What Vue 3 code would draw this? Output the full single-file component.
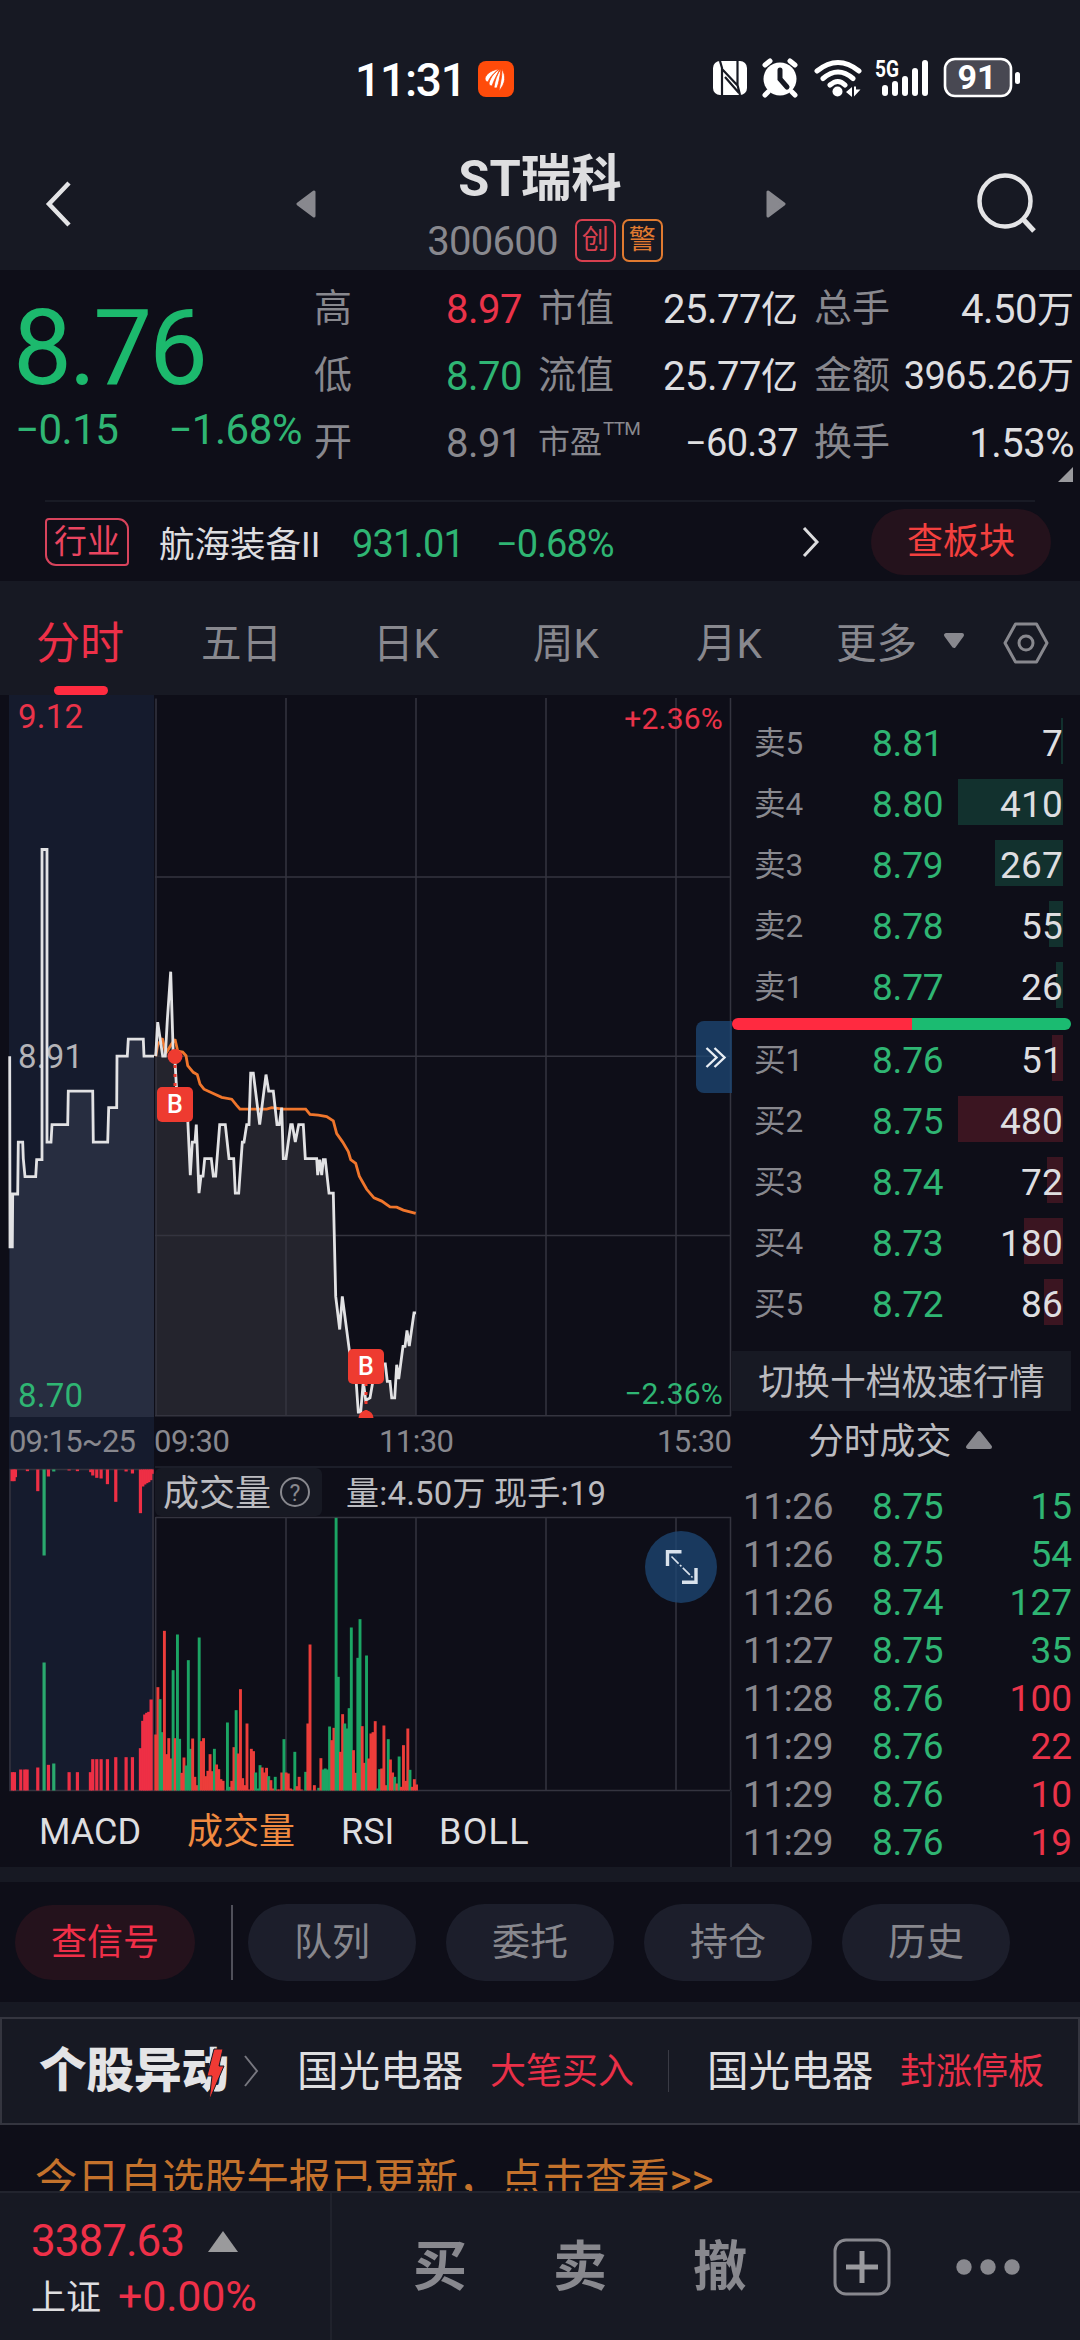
<script setup>
const quotes = [
  { label: '高', value: '8.97', tone: 'red' },
  { label: '市值', value: '25.77', unit: '亿' },
  { label: '总手', value: '4.50', unit: '万' },
  { label: '低', value: '8.70', tone: 'green' },
  { label: '流值', value: '25.77', unit: '亿' },
  { label: '金额', value: '3965.26', unit: '万', tight: true },
  { label: '开', value: '8.91', tone: 'muted' },
  { label: '市盈', sup: 'TTM', value: '−60.37', tight: true },
  { label: '换手', value: '1.53%' },
]

const asks = [
  { name: '卖5', price: '8.81', volume: 7, bar: 2 },
  { name: '卖4', price: '8.80', volume: 410, bar: 105 },
  { name: '卖3', price: '8.79', volume: 267, bar: 68 },
  { name: '卖2', price: '8.78', volume: 55, bar: 14 },
  { name: '卖1', price: '8.77', volume: 26, bar: 7 },
]
const bids = [
  { name: '买1', price: '8.76', volume: 51, bar: 11 },
  { name: '买2', price: '8.75', volume: 480, bar: 105 },
  { name: '买3', price: '8.74', volume: 72, bar: 16 },
  { name: '买4', price: '8.73', volume: 180, bar: 39 },
  { name: '买5', price: '8.72', volume: 86, bar: 19 },
]
const trades = [
  { time: '11:26', price: '8.75', volume: 15, tone: 'green' },
  { time: '11:26', price: '8.75', volume: 54, tone: 'green' },
  { time: '11:26', price: '8.74', volume: 127, tone: 'green' },
  { time: '11:27', price: '8.75', volume: 35, tone: 'green' },
  { time: '11:28', price: '8.76', volume: 100, tone: 'red' },
  { time: '11:29', price: '8.76', volume: 22, tone: 'red' },
  { time: '11:29', price: '8.76', volume: 10, tone: 'red' },
  { time: '11:29', price: '8.76', volume: 19, tone: 'red' },
]

// Price series: x in thirds of a pixel, y in chart units (2.119 per pixel) below the chart origin.
const parse = (s) =>
  s.trim().split(/\s+/).map((p) => {
    const [x, y] = p.split(',').map(Number)
    return `${(x / 3).toFixed(1)},${(y / 2.119 - 5).toFixed(1)}`
  }).join(' ')

const auction = parse(`29,776 30,1180 37,1180 38,1068 53,1068 55,958 68,958 70,993 75,1031 107,1031 110,995 126,995
 126,338 141,338 141,958 153,958 156,921 203,921 205,850 278,850 280,958 323,958 326,885 350,885 351,776 382,776
 385,740 430,740 432,776 462,776`)
const price = parse(`467,776 473,704 488,776 496,776 502,700 512,597 520,776 524,776 530,850 545,850 562,890 571,1028 577,958
 585,958 589,921 597,1066 603,1030 609,1030 614,993 634,993 640,1030 647,1030 659,921 676,921 687,993 701,993
 706,1066 716,1066 727,958 732,958 740,921 747,921 752,812 760,812 779,921 798,815 806,850 820,850 831,921 838,921
 845,885 850,993 858,993 872,921 877,921 886,958 896,921 910,921 916,993 950,993 953,1028 959,995 965,1028 970,995
 976,995 987,1066 1000,1066 1007,1285 1019,1355 1027,1285 1050,1410 1065,1430 1075,1530 1082,1530 1090,1465
 1097,1505 1110,1500 1120,1460 1140,1428 1156,1428 1162,1465 1170,1465 1175,1500 1184,1500 1190,1430 1196,1460
 1209,1391 1215,1391 1221,1357 1228,1390 1242,1320 1248,1320`)
const average = parse(`467,776 473,752 487,738 497,770 515,750 525,740 533,765 548,767 558,775 563,796 580,810 592,815
 600,835 612,846 640,855 665,863 695,867 710,880 720,888 800,888 815,885 850,888 917,888 930,899 955,901 980,904
 1000,913 1010,940 1028,958 1045,978 1052,995 1067,1003 1078,1030 1090,1045 1100,1058 1122,1076 1145,1083 1170,1095
 1190,1096 1210,1102 1247,1109`)

// Volume per minute: bar height in thirds of a pixel, with r/g for direction.
const volume = `168r 310r 274g 175g 479r 109r 157r 96r 361g 157r 468g 155g 53r 99r 75g 391g 125g 156r 41r 16r 459g
 148r 157r 43r 59r 109r 58r 125g 78r 64r 34r 29r 0r 204g 11g 29r 130r 241g 111r 304r 37r 16r 201r 3r 125r 118r 54g 6g
 76g 69r 54r 68r 43g 31r 6r 41g 3r 3r 54r 154g 54r 51r 6r 3r 116g 13r 41r 3r 0r 56g 201r 438r 0r 16r 0r 8g 97r 63g
 66g 63g 192g 151r 188r 818g 341g 116r 229r 201g 186g 247g 489g 121r 53r 398g 514g 193r 83r 405g 96r 171r 175r 208r
 6g 64g 66r 195r 16r 154g 93r 54r 41g 21r 102g 11r 136r 29r 186r 62g 11r 34r 18r`
  .trim().split(/\s+/)
  .map((v, i) => ({ x: (467 + i * 6.52) / 3 - 1.4, h: parseInt(v) / 3, up: v.endsWith('r') }))

const bars = (s) =>
  s.trim().split(/\s+/).map((v) => {
    const [x, h] = v.split(',')
    return { x: Number(x) / 3 - 1.5, h: parseInt(h) / 3, up: !h.endsWith('g') }
  })
const auctionTop = bars(`36,35 42,35 46,23 82,5 113,65 132,258g 145,21 161,6g 207,3 232,5 272,8 278,18 290,25 303,27
 322,44 347,97 378,6 397,12 421,131 428,51 434,45 440,41 446,38 452,32 456,13`)
const auctionBottom = bars(`37,55 43,55 62,63 74,63 81,63 113,69 132,384g 145,77 161,81g 207,55 232,55 271,55 278,94
 290,94 303,94 322,94 347,100 378,100 397,100 421,127 428,209 434,228 440,233 446,236 453,273`)
</script>

<template>
  <div class="app">
    <header class="top">
      <div class="status">
        <div class="clock">
          <span class="time">11:31</span>
          <svg width="36" height="36" viewBox="0 0 36 36">
            <rect width="36" height="36" rx="8" fill="#ff4b0a" />
            <path d="M7 17c2-5 7-8 14-9-6 5-9 8-11 13-2 0-3-2-3-4zM11 22c2-7 6-11 11-14-3 6-6 11-8 17-2 0-3-1-3-3zM16 26c1-7 3-13 7-18-1 8-2 13-4 19-2 0-3 0-3-1zM21 30c1-7 3-13 3-22 4 7 4 14-3 22z" fill="#fff" stroke="#ff4b0a" stroke-width=".8" />
          </svg>
        </div>
        <svg class="signals" width="310" height="44" viewBox="0 0 310 44">
          <g fill="#fff">
            <rect x="0" y="4" width="34" height="34" rx="7" />
            <circle cx="67" cy="22" r="16.5" />
            <circle cx="124.500" cy="34.500" r="5" />
            <path d="M133 35l6-5v10zM141 29.500v10l6.500-7h-4.500v-3z" />
            <rect x="169" y="28" width="6" height="11" rx="3" />
            <rect x="179" y="24" width="6" height="15" rx="3" />
            <rect x="189" y="19" width="6" height="20" rx="3" />
            <rect x="199" y="11" width="6" height="28" rx="3" />
            <rect x="209" y="3" width="6" height="36" rx="3" />
            <rect x="302" y="15" width="5" height="12" rx="2.500" />
          </g>
          <path d="M7 4l2 7v27M9 12l16 17M12 20l14 16M24.500 4v24l2.500 10" fill="none" stroke="#171923" stroke-width="2.200" />
          <path d="M52 8l5-4M82 8l-5-4M55 35l-3 3M79 35l3 3" stroke="#fff" stroke-width="5" stroke-linecap="round" />
          <path d="M67 13v9l7 8" fill="none" stroke="#171923" stroke-width="5" stroke-linecap="round" />
          <g fill="none" stroke="#fff" stroke-width="5" stroke-linecap="round">
            <path d="M104 14q21-17 42 0M110 21.500q15-13 30 0M117 28q8-7 15 0" />
          </g>
          <rect x="232" y="2" width="66" height="37" rx="10" fill="#484852" stroke="#fff" stroke-width="2.600" />
          <text x="162" y="20" class="net" textLength="24" lengthAdjust="spacingAndGlyphs">5G</text>
          <text x="264" y="32" class="battery" text-anchor="middle">91</text>
        </svg>
      </div>
      <div class="nav">
        <svg class="back" width="30" height="48" viewBox="0 0 30 48"><path d="M25 3L5 24l20 21" fill="none" stroke="#e4e4e6" stroke-width="4.500" /></svg>
        <svg class="prev" width="20" height="28" viewBox="0 0 20 28"><path d="M18 2v24L2 14z" fill="#88888e" stroke="#88888e" stroke-width="3" stroke-linejoin="round" /></svg>
        <div class="title">
          <h1>ST瑞科</h1>
          <div class="code"><span>300600</span><i class="tag">创</i><i class="tag warn">警</i></div>
        </div>
        <svg class="next" width="20" height="28" viewBox="0 0 20 28"><path d="M2 2v24l16-12z" fill="#88888e" stroke="#88888e" stroke-width="3" stroke-linejoin="round" /></svg>
        <svg class="search" width="62" height="62" viewBox="0 0 62 62"><circle cx="29" cy="29" r="25.500" fill="none" stroke="#e4e4e6" stroke-width="4.500" /><path d="M46 46l12 13" stroke="#e4e4e6" stroke-width="5" /></svg>
      </div>
    </header>

    <section class="quote">
      <div class="last green">
        <div class="big">8.76</div>
        <div class="change"><span>−0.15</span><span>−1.68%</span></div>
      </div>
      <div class="stats">
        <div v-for="q in quotes" :key="q.label" class="stat">
          <span class="label" :class="{ small: q.sup }">{{ q.label }}<sup v-if="q.sup">{{ q.sup }}</sup></span>
          <span class="value" :class="[q.tone, { tight: q.tight }]">{{ q.value }}<em v-if="q.unit">{{ q.unit }}</em></span>
        </div>
      </div>
      <svg class="corner" width="15" height="15"><path d="M15 0v15H0z" fill="#9a9a9e" /></svg>
    </section>

    <section class="industry">
      <span class="badge">行业</span>
      <span class="name">航海装备II</span>
      <span class="idx green">931.01</span>
      <span class="pct green">−0.68%</span>
      <svg class="go" width="20" height="32" viewBox="0 0 20 32"><path d="M3 2l13 14L3 30" fill="none" stroke="#dcdcde" stroke-width="3" /></svg>
      <button class="sector">查板块</button>
    </section>

    <nav class="tabs">
      <span class="tab active">分时</span>
      <span class="tab">五日</span>
      <span class="tab">日K</span>
      <span class="tab">周K</span>
      <span class="tab">月K</span>
      <span class="tab">更多</span>
      <svg class="drop" width="22" height="18" viewBox="0 0 22 18"><path d="M3 3h16l-8 11z" fill="#88888e" stroke="#88888e" stroke-width="4" stroke-linejoin="round" /></svg>
      <svg class="hex" width="46" height="42" viewBox="0 0 46 42"><path d="M12.500 2h21L44 21 33.500 40h-21L2 21z" fill="none" stroke="#88888e" stroke-width="3" stroke-linejoin="round" /><circle cx="23" cy="21" r="7" fill="none" stroke="#88888e" stroke-width="3" /></svg>
    </nav>

    <main class="market">
      <div class="charts">
        <svg class="chart" width="732" height="1097" viewBox="0 0 732 1097">
          <rect x="9" y="0" width="145" height="1096" fill="#151b2d" />
          <polygon :points="`9.700,722 ${auction} 154,722`" fill="#272d40" />
          <polygon :points="`155.700,720 ${price} 416,720`" fill="#24242d" />
          <g stroke="#34343f" stroke-width="1.500">
            <path d="M156 3.500V721M155 182h575.500M155 361.300h575.500M155 540.500h575.500M155 720.800h576" fill="none" />
            <path d="M286 3V721M416 3V721M546 3V721M676 3V721M730.500 3V721" />
            <path d="M155.700 822.500H730.500V1095.500H10V774.500H153V1095M155.700 822V1095M286 822V1095M416 822V1095M546 822V1095M676 822V1095" fill="none" />
          </g>
          <path d="M155 772H732M731 1095V1097" stroke="#1c1e29" stroke-width="2" />
          <text x="18" y="373" class="axis big-axis" fill="#b4b4b8">8.91</text>
          <polyline :points="auction" class="line" />
          <polyline :points="average" class="line avg" />
          <polyline :points="price" class="line" />
          <text x="18" y="33" class="axis big-axis" fill="#ea3349">9.12</text>
          <text x="18" y="712" class="axis big-axis" fill="#2fb573">8.70</text>
          <text x="723" y="34" class="axis pct-axis" text-anchor="end" fill="#ea3349">+2.36%</text>
          <text x="723" y="709" class="axis pct-axis" text-anchor="end" fill="#2fb573">−2.36%</text>

          <g fill="#ee3b30">
            <path d="M175 361v35M366 688v32" stroke="#ee3b30" stroke-width="3" stroke-dasharray="3 6" />
            <circle cx="175" cy="361.500" r="7.500" />
            <path d="M358.500 723a7.500 7.500 0 1 1 15 0z" />
            <rect x="157" y="392" width="36" height="35" rx="5" />
            <rect x="348" y="654" width="36" height="35" rx="5" />
          </g>
          <text x="175" y="418" class="mark">B</text>
          <text x="366" y="680" class="mark">B</text>

          <path d="M732 326h-28a8 8 0 0 0-8 8v56a8 8 0 0 0 8 8h28z" fill="#1d4876" fill-opacity=".75" />
          <path d="M706.500 353l10 9.500-10 9.500M714.500 353l10 9.500-10 9.500" fill="none" stroke="#e8eef4" stroke-width="2.400" />

          <text x="9" y="757" class="clock-axis" textLength="127">09:15~25</text>
          <text x="154" y="757" class="clock-axis" textLength="76">09:30</text>
          <text x="379" y="757" class="clock-axis" textLength="75">11:30</text>
          <text x="657" y="757" class="clock-axis" textLength="75">15:30</text>

          <rect x="155" y="773" width="167" height="48" rx="6" fill="#171923" />
          <text x="163" y="811" class="vol-title">成交量</text>
          <circle cx="295" cy="797" r="14" fill="none" stroke="#88888e" stroke-width="2" />
          <text x="295" y="805.500" class="help">?</text>
          <text x="346" y="810" class="vol-info" textLength="260">量:4.50万 现手:19</text>

          <rect v-for="(b, i) in auctionTop" :key="'t' + i" :x="b.x" y="774.500" width="3.200" :height="b.h" :fill="b.up ? '#ee2f45' : '#2aa96e'" />
          <rect v-for="(b, i) in auctionBottom" :key="'b' + i" :x="b.x" :y="1095.500 - b.h" width="3.200" :height="b.h" :fill="b.up ? '#ee2f45' : '#2aa96e'" />
          <rect v-for="(b, i) in volume" :key="'v' + i" :x="b.x" :y="1095.500 - b.h" width="2.900" :height="b.h" :fill="b.up ? '#ec3d3a' : '#1ba564'" />

          <circle cx="681" cy="872" r="36" fill="#1d4876" fill-opacity=".75" />
          <path d="M667.500 871v-14.200h14M696 873v14.200h-14" fill="none" stroke="#d9e2ec" stroke-width="3.400" />
          <path d="M671.500 861.500l21 21" stroke="#d9e2ec" stroke-width="1.600" stroke-dasharray="10 2 2 2" />
        </svg>
        <div class="indicators">
          <span>MACD</span><span class="on">成交量</span><span>RSI</span><span>BOLL</span>
        </div>
      </div>

      <aside class="book">
        <div class="levels asks">
          <div v-for="r in asks" :key="r.name" class="level">
            <span class="lname">{{ r.name }}</span><span class="lprice green">{{ r.price }}</span>
            <span class="lvol"><i class="bar sell" :style="{ width: r.bar + 'px' }"></i><b>{{ r.volume }}</b></span>
          </div>
        </div>
        <div class="ratio"><i></i><i></i></div>
        <div class="levels bids">
          <div v-for="r in bids" :key="r.name" class="level">
            <span class="lname">{{ r.name }}</span><span class="lprice green">{{ r.price }}</span>
            <span class="lvol"><i class="bar buy" :style="{ width: r.bar + 'px' }"></i><b>{{ r.volume }}</b></span>
          </div>
        </div>
        <div class="switch">切换十档极速行情</div>
        <div class="ticks-title">分时成交<svg width="28" height="20" viewBox="0 0 28 20"><path d="M3 17h22L14 3z" fill="#88888e" stroke="#88888e" stroke-width="4" stroke-linejoin="round" /></svg></div>
        <div class="ticks">
          <div v-for="(t, i) in trades" :key="i" class="tick">
            <span class="ttime">{{ t.time }}</span><span class="lprice green">{{ t.price }}</span><span class="tvol" :class="t.tone">{{ t.volume }}</span>
          </div>
        </div>
      </aside>
    </main>

    <section class="actions">
      <button class="signal">查信号</button>
      <i class="sep"></i>
      <button>队列</button><button>委托</button><button>持仓</button><button>历史</button>
    </section>

    <section class="alerts">
      <div class="brand">个股异动<svg width="20" height="54" viewBox="0 0 20 54"><path d="M9 1h9l-4 17h5L4 53l3-25H2z" fill="#f03a34" stroke="#171923" stroke-width="1" /></svg></div>
      <svg class="more" width="18" height="34" viewBox="0 0 18 34"><path d="M2 2l12 15L2 32" fill="none" stroke="#77777f" stroke-width="2" /></svg>
      <span class="stock">国光电器</span><span class="event">大笔买入</span>
      <i class="bar-sep"></i>
      <span class="stock">国光电器</span><span class="event">封涨停板</span>
    </section>

    <section class="notice">今日自选股午报已更新，点击查看&gt;&gt;</section>

    <footer class="dock">
      <div class="index">
        <div class="row"><span class="num">3387.63</span><svg width="30" height="21"><path d="M15 0l15 21H0z" fill="#9a9a9c" /></svg></div>
        <div class="row"><span class="iname">上证</span><span class="ipct">+0.00%</span></div>
      </div>
      <div class="ops">
        <span>买</span><span>卖</span><span>撤</span>
        <svg class="plus" width="58" height="58" viewBox="0 0 58 58"><rect x="2" y="2" width="54" height="54" rx="11" fill="none" stroke="#88888e" stroke-width="3" /><path d="M29 13v32M13 29h32" stroke="#9a9a9e" stroke-width="5" /></svg>
        <svg class="dots" width="64" height="16" viewBox="0 0 64 16"><g fill="#88888e"><circle cx="8" cy="8" r="7.700" /><circle cx="32" cy="8" r="7.700" /><circle cx="56" cy="8" r="7.700" /></g></svg>
      </div>
    </footer>
  </div>
</template>

<style>
body { background: #0e0e18; }
</style>

<style scoped>
* { box-sizing: border-box; }
.app {
  width: 1080px; height: 2340px; overflow: hidden; background: #0e0e18; color: #dedee0;
  font-family: Roboto, "Noto Sans CJK SC", sans-serif; display: flex; flex-direction: column;
}
.app > * { flex: none; }
i, em { font-style: normal; }
svg { display: block; flex: none; }
button { border: 0; padding: 0; font-family: inherit; }
.red { color: #ea3349; }
.green { color: #2fb573; }
.muted { color: #88888e; }

.top { height: 270px; background: #171923; }
.status { height: 135px; padding: 57px 0 0 355px; display: flex; }
.clock { display: flex; align-items: center; height: 44px; width: 358px; gap: 14px; }
.time { font-size: 46px; font-weight: 500; color: #fff; letter-spacing: -1.2px; width: 109px; line-height: 46px; padding-top: 2px; }
.net { font-size: 23px; font-weight: 700; fill: #fff; }
.battery { font-size: 34px; font-weight: 700; fill: #fff; }
.nav { height: 135px; display: flex; align-items: flex-start; }
.back { margin: 45px 0 0 44px; }
.prev { margin: 55px 0 0 222px; }
.title { width: 450px; height: 135px; display: flex; flex-direction: column; align-items: center; }
h1 { margin: 11px 0 0 -2px; font-size: 50.500px; line-height: 66px; font-weight: 700; color: #dedee0; }
.code { display: flex; align-items: center; height: 48px; margin: 4px 0 0 8px; font-size: 40px; color: #88888e; letter-spacing: -0.7px; }
.code span { padding-top: 2px; }
.tag { width: 41px; height: 43px; border: 2px solid #d8404f; border-radius: 7px; color: #d8404f; font-size: 27px; line-height: 38px; text-align: center; margin-left: 6px; letter-spacing: 0; }
.tag:nth-child(2) { margin-left: 17px; }
.tag.warn { border-color: #e07a30; color: #e07a30; }
.next { margin: 55px 0 0 0; }
.search { margin: 37px 0 0 190px; }

.quote { height: 230px; display: flex; position: relative; }
.last { width: 314px; padding: 31px 0 0 13px; }
.big { font-size: 105px; line-height: 96px; letter-spacing: -3.200px; color: #1cb96d; }
.change { display: flex; font-size: 42px; line-height: 46px; margin-top: 10px; justify-content: space-between; padding: 0 12px 0 2px; letter-spacing: -0.5px; }
.stats { width: 760px; padding-top: 6px; display: grid; grid-template-columns: 208px 260px 260px; grid-auto-rows: 67px; justify-content: space-between; }
.stat { display: flex; justify-content: space-between; align-items: center; line-height: 67px; }
.label { font-size: 38px; color: #88888e; display: flex; align-items: center; margin-top: -2px; }
.label.small { font-size: 32px; }
sup { font-size: 19px; line-height: 20px; align-self: flex-start; margin: 10px 0 0 1px; letter-spacing: -0.8px; }
.value { font-size: 40px; letter-spacing: -0.5px; white-space: nowrap; }
.value.tight { font-size: 38px; letter-spacing: -0.700px; }
.value em { font-size: 37px; letter-spacing: 0; line-height: 40px; }
.corner { position: absolute; right: 7px; top: 197px; }

.industry { height: 81px; display: flex; align-items: center; position: relative; padding-top: 3px; }
.industry::before { content: ""; position: absolute; left: 45px; right: 45px; top: 0; height: 2px; background: #191b25; }
.badge { margin-left: 45px; width: 84px; height: 48px; border: 2px solid #d8435c; border-radius: 4px 11px 4px 11px; color: #ea4560; font-size: 33px; line-height: 44px; text-align: center; }
.name { margin-left: 30px; width: 193px; font-size: 35.500px; padding-bottom: 2px; }
.idx { width: 144px; font-size: 38px; letter-spacing: -0.8px; padding-top: 4px; }
.pct { width: 305px; font-size: 38px; letter-spacing: -1px; padding-top: 4px; }
.sector { margin-left: 50px; width: 180px; height: 66px; border-radius: 33px; background: #24121c; color: #f4403f; font-size: 36px; line-height: 67px; }

.tabs { height: 114px; background: #171923; display: flex; align-items: center; color: #88888e; font-size: 40.500px; }
.tab { height: 114px; line-height: 127px; width: 165px; position: relative; white-space: nowrap; }
.tab:nth-child(1) { margin-left: 36px; color: #ee3048; font-size: 44px; }
.tab:nth-child(2) { width: 172px; }
.tab:nth-child(3) { width: 160px; }
.tab:nth-child(4) { width: 163px; }
.tab:nth-child(5) { width: 140px; }
.tab:nth-child(6) { width: 107px; }
.active::after { content: ""; position: absolute; left: 18px; bottom: 0; width: 54px; height: 9px; border-radius: 5px; background: #ff2b40; }
.hex { margin-left: 38px; margin-top: 10px; }
.drop { margin-top: 6px; }

.market { height: 1172px; display: flex; }
.charts { width: 732px; }
.line { fill: none; stroke: #e2e2e4; stroke-width: 2.800; stroke-linejoin: miter; stroke-miterlimit: 2; }
.line.avg { stroke: #f0762c; }
.axis { letter-spacing: 0.2px; }
.big-axis { font-size: 33px; }
.pct-axis { font-size: 30px; }
.mark { font-size: 25px; font-weight: 500; fill: #fff; text-anchor: middle; }
.clock-axis { font-size: 31px; fill: #88888e; }
.vol-title { font-size: 36px; fill: #bcbcc0; }
.vol-info { font-size: 33px; fill: #bcbcc0; }
.help { font-size: 23px; fill: #88888e; text-anchor: middle; }
.indicators { height: 75px; border-right: 2px solid #20222d; display: flex; align-items: center; font-size: 36px; line-height: 70px; padding: 5px 0 0 39px; color: #dedee0; }
.indicators span:nth-child(1) { width: 148px; }
.indicators span:nth-child(2) { width: 154px; }
.indicators span:nth-child(3) { width: 98px; }
.indicators span:nth-child(4) { letter-spacing: 1.2px; }
.indicators .on { color: #f08a40; }

.book { width: 348px; }
.levels { height: 323px; }
.asks { padding-top: 18px; }
.bids { height: 321px; }
.level { height: 61px; display: flex; align-items: center; line-height: 61px; }
.lname { margin-left: 22px; width: 118px; color: #88888e; font-size: 31.500px; }
.lprice { width: 90px; font-size: 37px; letter-spacing: -0.2px; }
.lvol { width: 101px; height: 61px; display: flex; justify-content: flex-end; position: relative; font-size: 37px; }
.lvol b { font-weight: 400; position: relative; letter-spacing: 0.2px; }
.bar { position: absolute; right: 0; top: 5px; height: 46px; }
.sell { background: #12312e; }
.buy { background: #3b1521; }
.ratio { width: 339px; height: 12px; border-radius: 6px; overflow: hidden; display: flex; }
.ratio i:first-child { width: 180px; background: #ff2a40; }
.ratio i:last-child { flex: 1; background: #1bbb71; }
.switch { width: 339px; height: 60px; background: #171923; color: #bcbcc0; font-size: 35.800px; line-height: 56px; padding-top: 4px; text-align: center; }
.ticks-title { height: 60px; color: #bcbcc0; font-size: 35.800px; line-height: 58px; padding-top: 2px; display: flex; padding-left: 76px; gap: 14px; align-items: flex-start; }
.ticks-title svg { margin-top: 17px; }
.ticks { height: 396px; display: flex; flex-direction: column; justify-content: flex-end; }
.tick { flex: none; height: 48px; display: flex; line-height: 48px; font-size: 37px; }
.ttime { margin-left: 11px; width: 129px; color: #88888e; letter-spacing: -0.4px; }
.tvol { width: 110px; text-align: right; }

.actions { height: 150px; border: solid #171923; border-width: 15px 0; display: flex; align-items: center; padding-left: 15px; }
.actions button { width: 168px; height: 77px; border-radius: 39px; background: #1c1e2b; color: #88888e; font-size: 38px; line-height: 77px; margin-right: 30px; }
.actions .signal { width: 180px; height: 75px; background: #24121c; color: #f02f48; font-size: 36px; margin-right: 36px; }
.sep { width: 2px; height: 75px; background: #50505a; margin-right: 15px; }

.alerts { height: 108px; border: 2px solid #34353f; background: #171923; display: flex; align-items: center; }
.brand { margin-left: 37px; width: 205px; font-size: 47.500px; font-weight: 900; color: #e4e4e6; position: relative; line-height: 103px; white-space: nowrap; }
.brand svg { position: absolute; left: 166px; top: 28px; }
.stock { margin-left: 36px; width: 194px; font-size: 41.600px; line-height: 104px; padding-top: 2px; }
.event { width: 179px; font-size: 36px; color: #ea3048; line-height: 104px; padding-top: 2px; }
.bar-sep { width: 1px; height: 42px; background: #3a3b45; }
.bar-sep + .stock { margin-left: 38px; }

.notice { height: 66px; overflow: hidden; padding-left: 35px; font-size: 42.300px; line-height: 60px; padding-top: 25px; color: #c4722c; white-space: nowrap; }

.dock { height: 149px; background: #171923; border-top: 2px solid #22242e; display: flex; }
.index { width: 332px; border-right: 2px solid #20222c; padding: 23px 0 0 31px; }
.row { display: flex; align-items: center; height: 50px; color: #ee3048; }
.row + .row { margin-top: 5px; }
.num { font-size: 44px; letter-spacing: -1px; width: 177px; }
.iname { font-size: 35px; color: #dedee0; width: 87px; margin-top: -4px; }
.ipct { font-size: 43px; letter-spacing: -0.2px; }
.ops { display: flex; align-items: center; font-size: 54px; font-weight: 700; color: #88888e; height: 147px; padding-left: 81px; }
.ops span { width: 140px; line-height: 140px; margin-top: 3px; }
.dots { margin-left: 65px; }
</style>
